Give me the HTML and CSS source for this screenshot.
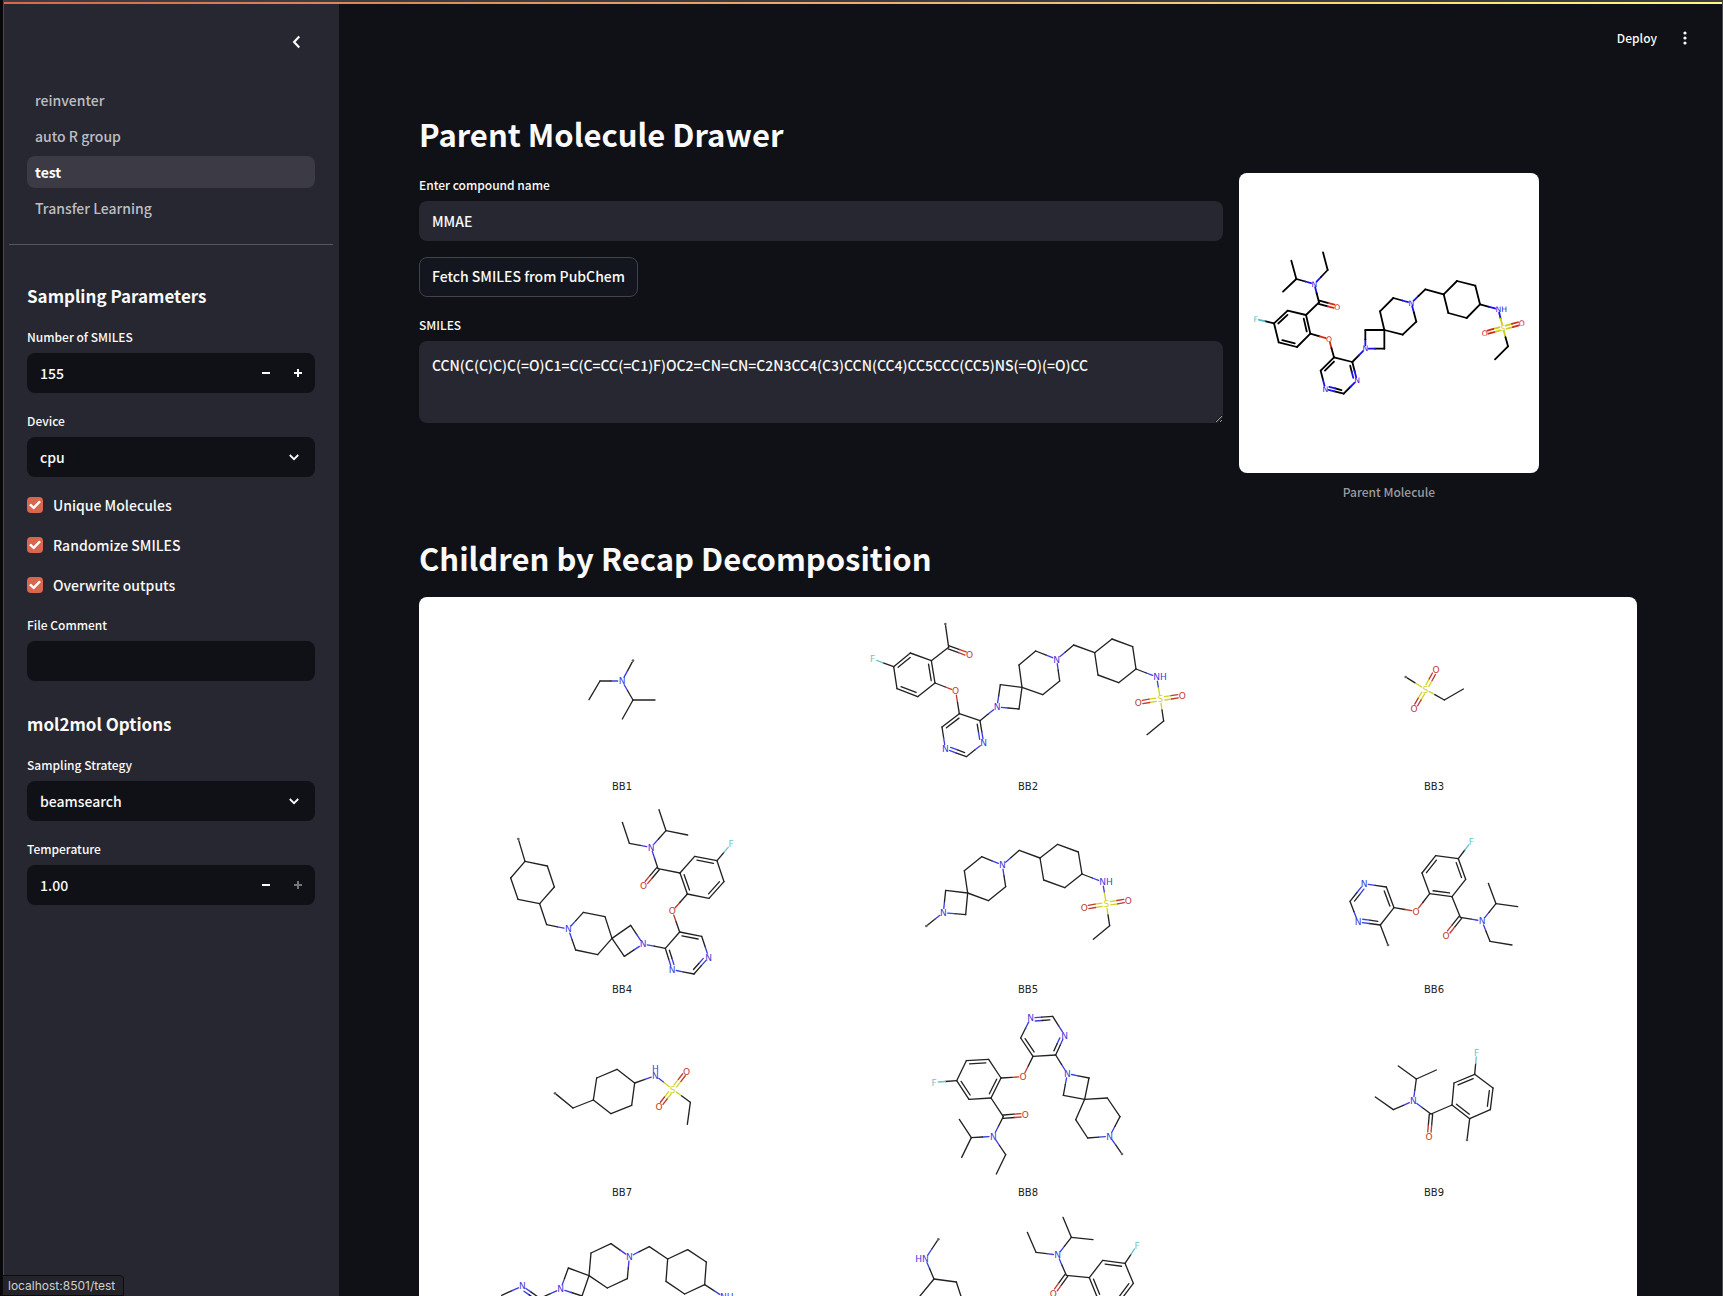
FILE: index.html
```html
<!DOCTYPE html>
<html lang="en">
<head>
<meta charset="utf-8">
<meta name="viewport" content="width=device-width, initial-scale=1">
<title>test</title>
<link rel="stylesheet" href="styles.css">
</head>
<body>
<div class="window">
  <div class="decoration"></div>
  <div class="app">
    <aside class="sidebar">
      <div class="sidebar-top">
        <button class="icon-button" type="button" aria-label="Collapse sidebar">
          <svg width="20" height="20" viewBox="0 0 24 24" fill="none" stroke="currentColor" stroke-width="2.6"><path d="M14.7 5.5 8.5 12l6.2 6.500"/></svg>
        </button>
      </div>
      <nav class="pages">
        <a class="page-link" href="#reinventer">reinventer</a>
        <a class="page-link" href="#auto">auto R group</a>
        <a class="page-link current" href="#test" aria-current="page">test</a>
        <a class="page-link" href="#transfer">Transfer Learning</a>
      </nav>
      <form class="options">
        <h2 class="section">Sampling Parameters</h2>
        <div class="field">
          <label class="label" for="count">Number of SMILES</label>
          <div class="control number">
            <input class="entry" id="count" type="number" value="155">
            <button class="step" type="button" aria-label="Decrease"><svg width="8" height="8" viewBox="0 0 8 8"><path d="M0 3h8v2H0z" fill="currentColor"/></svg></button>
            <button class="step" type="button" aria-label="Increase"><svg width="8" height="8" viewBox="0 0 8 8"><path d="M3 0h2v3h3v2H5v3H3V5H0V3h3z" fill="currentColor"/></svg></button>
          </div>
        </div>
        <div class="field">
          <label class="label" for="device">Device</label>
          <div class="control select">
            <select class="entry" id="device"><option>cpu</option></select>
            <svg class="chevron" width="10" height="7" viewBox="0 0 10 7" fill="none" stroke="currentColor" stroke-width="1.800"><path d="M.8 1 5 5.200 9.200 1"/></svg>
          </div>
        </div>
        <label class="check"><input type="checkbox" checked>Unique Molecules</label>
        <label class="check"><input type="checkbox" checked>Randomize SMILES</label>
        <label class="check"><input type="checkbox" checked>Overwrite outputs</label>
        <div class="field">
          <label class="label" for="comment">File Comment</label>
          <div class="control"><input class="entry" id="comment" type="text"></div>
        </div>
        <h2 class="section">mol2mol Options</h2>
        <div class="field">
          <label class="label" for="strategy">Sampling Strategy</label>
          <div class="control select">
            <select class="entry" id="strategy"><option>beamsearch</option></select>
            <svg class="chevron" width="10" height="7" viewBox="0 0 10 7" fill="none" stroke="currentColor" stroke-width="1.800"><path d="M.8 1 5 5.200 9.200 1"/></svg>
          </div>
        </div>
        <div class="field">
          <label class="label" for="temperature">Temperature</label>
          <div class="control number">
            <input class="entry" id="temperature" type="number" step="0.01" value="1.00">
            <button class="step" type="button" aria-label="Decrease"><svg width="8" height="8" viewBox="0 0 8 8"><path d="M0 3h8v2H0z" fill="currentColor"/></svg></button>
            <button class="step" type="button" aria-label="Increase" disabled><svg width="8" height="8" viewBox="0 0 8 8"><path d="M3 0h2v3h3v2H5v3H3V5H0V3h3z" fill="currentColor"/></svg></button>
          </div>
        </div>
      </form>
    </aside>
    <main class="main">
      <header class="toolbar">
        <button class="deploy" type="button">Deploy</button>
        <button class="icon-button" type="button" aria-label="Menu">
          <svg width="4" height="14" viewBox="0 0 4 14" fill="currentColor"><circle cx="2" cy="2" r="1.600"/><circle cx="2" cy="7" r="1.600"/><circle cx="2" cy="12" r="1.600"/></svg>
        </button>
      </header>
      <h1 class="title">Parent Molecule Drawer</h1>
      <div class="columns">
        <form class="compound">
          <div class="field">
            <label class="label" for="name">Enter compound name</label>
            <div class="control"><input class="entry" id="name" type="text" value="MMAE"></div>
          </div>
          <button class="fetch" type="button">Fetch SMILES from PubChem</button>
          <div class="field">
            <label class="label" for="smiles">SMILES</label>
            <textarea class="smiles" id="smiles" spellcheck="false">CCN(C(C)C)C(=O)C1=C(C=CC(=C1)F)OC2=CN=CN=C2N3CC4(C3)CCN(CC4)CC5CCC(CC5)NS(=O)(=O)CC</textarea>
          </div>
        </form>
        <figure class="parent">
          <svg class="molecule bold" data-molecule="parent" viewBox="27 39 900 900"></svg>
          <figcaption class="parent-caption">Parent Molecule</figcaption>
        </figure>
      </div>
      <h1 class="title second">Children by Recap Decomposition</h1>
      <div class="children">
        <figure class="child"><svg class="molecule" data-molecule="BB1" viewBox="27 21 1218 534"></svg><figcaption>BB1</figcaption></figure>
        <figure class="child"><svg class="molecule" data-molecule="BB2" viewBox="-45 -9 1218 534"></svg><figcaption>BB2</figcaption></figure>
        <figure class="child"><svg class="molecule" data-molecule="BB3" viewBox="-207 -9 1218 534"></svg><figcaption>BB3</figcaption></figure>
        <figure class="child"><svg class="molecule" data-molecule="BB4" viewBox="27 630 1218 534"></svg><figcaption>BB4</figcaption></figure>
        <figure class="child"><svg class="molecule" data-molecule="BB5" viewBox="-45 600 1218 534"></svg><figcaption>BB5</figcaption></figure>
        <figure class="child"><svg class="molecule" data-molecule="BB6" viewBox="-207 600 1218 534"></svg><figcaption>BB6</figcaption></figure>
        <figure class="child"><svg class="molecule" data-molecule="BB7" viewBox="-243 39 1218 534"></svg><figcaption>BB7</figcaption></figure>
        <figure class="child"><svg class="molecule" data-molecule="BB8" viewBox="-105 39 1218 534"></svg><figcaption>BB8</figcaption></figure>
        <figure class="child"><svg class="molecule" data-molecule="BB9" viewBox="-297 -51 1218 534"></svg><figcaption>BB9</figcaption></figure>
        <figure class="child"><svg class="molecule" data-molecule="BB10" viewBox="-243 648 1218 534"></svg><figcaption>BB10</figcaption></figure>
        <figure class="child"><svg class="molecule" data-molecule="BB11" viewBox="-105 648 1218 534"></svg><figcaption>BB11</figcaption></figure>
      </div>
    </main>
  </div>
</div>
<div class="status">localhost:8501/test</div>
<script src="molecules.js"></script>
</body>
</html>
```
FILE: styles.css
```css
* { box-sizing: border-box; }

body {
  margin: 0;
  background: #08080a;
  color: #fafafa;
  font-family: "Noto Sans CJK SC", "Noto Sans", sans-serif;
  font-size: 14px;
  font-weight: 500;
  line-height: 24px;
}

button, input, select, textarea { font: inherit; color: inherit; }
button { padding: 0; border: 0; background: none; cursor: pointer; }
h1, h2, figure { margin: 0; }
svg { display: block; }

.window {
  display: flex;
  flex-direction: column;
  height: 100vh;
  margin-left: 3px;
  border: solid #4a4a50;
  border-width: 2px 1px 0 1px;
  border-top-color: #3c3c44;
  background: #0f1116;
}

.decoration {
  flex: none;
  height: 2px;
  background: linear-gradient(90deg, #d9664f, #fffd80);
}

.app { display: flex; flex: 1; min-height: 0; }

/* Sidebar */
.sidebar {
  flex: none;
  width: 335px;
  background: #262730;
  overflow-y: auto;
  scrollbar-width: none;
}

.sidebar-top {
  display: flex;
  justify-content: flex-end;
  height: 80px;
  padding: 28px 32px 0 0;
}

.icon-button {
  display: grid;
  place-items: center;
  width: 20px;
  height: 20px;
}

.pages {
  display: flex;
  flex-direction: column;
  gap: 4px;
  margin: 0 6px 0 5px;
  padding: 0 18px 20px;
  border-bottom: 1px solid #55565d;
}

.page-link {
  padding: 4px 8px;
  border-radius: 8px;
  color: #bebec1;
  text-decoration: none;
}

.page-link.current { background: #3c3b45; color: #fff; font-weight: 700; }

.options {
  display: flex;
  flex-direction: column;
  gap: 16px;
  padding: 24px 24px 24px 23px;
}

.section {
  padding: 15px 0 1px;
  font-size: 17px;
  font-weight: 700;
  line-height: 24px;
}

.field { display: flex; flex-direction: column; gap: 4px; }
.label { font-size: 12px; }

.control {
  display: flex;
  height: 40px;
  border-radius: 8px;
  overflow: hidden;
}

.sidebar .control { background: #0f1116; }
.main .control { background: #262730; }

.entry {
  flex: 1;
  width: 100%;
  min-width: 0;
  padding: 0 13px;
  border: 0;
  outline: 0;
  background: transparent;
  appearance: none;
}

.number { padding-right: 1px; }
.number .entry { appearance: textfield; }
.number .entry::-webkit-inner-spin-button { appearance: none; margin: 0; }

.step { display: grid; place-items: center; width: 32px; }
.step:disabled { color: #73747d; }

.select { display: grid; align-items: center; }
.select > * { grid-area: 1 / 1; }
.select .entry { height: 40px; }
.chevron { justify-self: end; margin-right: 16px; pointer-events: none; }

.check { display: flex; align-items: center; gap: 10px; }

.check input {
  display: grid;
  place-items: center;
  width: 16px;
  height: 16px;
  margin: 0;
  border-radius: 4px;
  appearance: none;
}

.check input:checked { background: #d9664f; }

.check input:checked::before {
  content: "";
  width: 12px;
  height: 10px;
  background: #fff;
  clip-path: polygon(0 52%, 16% 36%, 38% 62%, 84% 5%, 100% 20%, 40% 96%);
}

/* Main area */
.main {
  flex: 1;
  min-width: 0;
  padding: 0 85px 0 80px;
  overflow-y: auto;
  scrollbar-width: none;
}

.toolbar {
  display: flex;
  align-items: center;
  justify-content: flex-end;
  gap: 18px;
  height: 68px;
  margin: 0 -58px 41px 0;
}

.deploy { font-size: 12px; }

.title {
  margin-bottom: 18px;
  font-size: 31px;
  font-weight: 700;
  line-height: 42px;
}

.title.second { margin-top: 33px; }

.columns { display: grid; grid-template-columns: 101fr 50fr; gap: 16px; }

.compound {
  display: flex;
  flex-direction: column;
  align-items: stretch;
  gap: 16px;
}

.fetch {
  align-self: flex-start;
  height: 40px;
  padding: 0 12px 2px;
  border: 1px solid #41434b;
  border-radius: 8px;
  background: #13161e;
}

.smiles {
  height: 82px;
  padding: 12px 13px;
  border: 0;
  border-radius: 8px;
  outline: 0;
  background: #262730;
  resize: vertical;
}

.parent { width: 300px; max-width: 100%; }
.parent .molecule { border-radius: 8px; background: #fff; }

.parent-caption {
  padding-top: 7px;
  color: #9b9ca0;
  font-size: 12px;
  text-align: center;
}

.children {
  display: grid;
  grid-template-columns: repeat(3, 1fr);
  border-radius: 8px;
  background: #fff;
}

.child { padding-bottom: 1px; }

.child figcaption {
  color: #222;
  font-family: "DejaVu Sans", sans-serif;
  font-size: 10px;
  font-weight: 400;
  line-height: 24px;
  text-align: center;
}

/* Molecule drawings */
.molecule { width: 100%; overflow: visible; }

.molecule line { stroke-width: 4; stroke-linecap: round; }
.molecule.bold line { stroke-width: 5.4; }

.molecule text {
  font-family: "DejaVu Sans", sans-serif;
  font-size: 27px;
  font-weight: 400;
}

.molecule.bold text { font-size: 23px; }

/* Link preview in the window's corner */
.status {
  position: fixed;
  left: 2px;
  bottom: 0;
  height: 21px;
  padding: 0 8px 0 5px;
  border: 1px solid #0c0c0e;
  border-radius: 0 4px 0 0;
  background: #232329;
  color: #cfcfd2;
  font-family: Inter, sans-serif;
  font-size: 12px;
  font-weight: 400;
  line-height: 20px;
}
```
FILE: molecules.js
```js
// Atoms are "x,y" or "x,y,label". Bonds are "a-b" (single), "a=b" (double,
// two even lines) and "a:b" (ring double, inner line to the right of a to b).
const MOLECULES = {
  parent: {
    atoms: "184,302 199,357 159,395 253,372,N 293,330 279,277 267,427 322,441,O 228,465 173,452 132,490 77,477,F 146,547 201,561 241,521 297,537,O 312,592 272,632 286,687,N 341,701 381,661,N 367,606 406,566,N 406,510 463,510 463,566 450,454 490,414 544,429,N 559,485 518,524 586,388 641,403 681,363 736,377 750,433 710,474 655,459 805,448,NH 819,504,S 764,519,O 875,489,O 834,559 795,598",
    bonds: "0-1 1-2 1-3 3-4 4-5 3-6 6=7 6-8 8-9 10:9 10-11 10-12 13:12 13-14 8:14 14-15 15-16 17:16 17-18 19:18 19-20 21:20 21-16 21-22 22-23 23-24 24-25 25-22 24-26 26-27 27-28 28-29 29-30 30-24 28-31 31-32 32-33 33-34 34-35 35-36 36-37 37-32 35-38 38-39 39=40 39=41 39-42 42-43"
  },
  BB1: {
    atoms: "669,212,* 636,273,N 570,273 537,329 669,330 735,330 637,387",
    bonds: "0-1 1-2 2-3 1-4 4-5 4-6"
  },
  BB2: {
    atoms: "316,72,* 326,142 389,165,O 274,182 211,159 161,200 98,177,F 171,266 233,290 285,249 347,273,O 358,341 306,381 316,447,N 379,470 431,429,N 420,362 471,321,N 481,254 546,262 537,327 537,195 587,153 650,178,N 659,243 608,284 701,135 764,158 816,117 878,140 888,207 836,248 774,225 950,231,NH 961,297,S 895,308,O 1027,287,O 971,363 921,404",
    bonds: "0-1 1=2 1-3 3-4 5:4 5-6 5-7 8:7 8-9 3:9 9-10 10-11 12:11 12-13 14:13 14-15 16:15 16-11 16-17 17-18 18-19 19-20 20-17 19-21 21-22 22-23 23-24 24-25 25-19 23-26 26-27 27-28 28-29 29-30 30-31 31-32 32-27 30-33 33-34 34=35 34=36 34-37 37-38"
  },
  BB3: {
    atoms: "317,231,* 376,268,S 408,210,O 342,326,O 433,300 490,267",
    bonds: "0-1 1=2 1=3 1-4 4-5"
  },
  BB4: {
    atoms: "325,747,* 345,814 412,828 433,891 389,941 324,928 302,864 410,1004 475,1017,N 520,967 585,980 606,1045 563,1094 497,1080 662,1006 699,1062,N 643,1099 766,1075 809,1026 875,1039 896,1102,N 852,1152 786,1139,N 787,963,O 832,912 810,849 854,799 921,812 942,875 897,925 963,762,F 744,836 701,887,O 723,772,N 658,760 637,697 768,722 747,659 833,735",
    bonds: "0-1 1-2 2-3 3-4 4-5 5-6 6-1 4-7 7-8 8-9 9-10 10-11 11-12 12-13 13-8 11-14 14-15 15-16 16-11 15-17 17-18 18:19 19-20 20:21 21-22 22:17 18-23 23-24 24:25 25-26 26:27 27-28 28:29 29-24 27-30 25-31 31=32 31-33 33-34 34-35 33-36 36-37 36-38"
  },
  BB5: {
    atoms: "259,978,* 310,938,N 317,871 383,879 377,944 373,812 425,770 487,795,N 497,860 445,902 538,751 600,774 653,733 715,756 726,822 674,863 611,840 788,846,NH 799,912,S 733,923,O 865,901,O 809,977 760,1018",
    bonds: "0-1 1-2 2-3 3-4 4-1 3-5 5-6 6-7 7-8 8-9 9-3 7-10 10-11 11-12 12-13 13-14 14-15 15-16 16-11 14-17 17-18 18=19 18=20 18-21 21-22"
  },
  BB6: {
    atoms: "264,1035,* 241,975 174,966,N 150,904 192,851,N 259,861 282,923 348,934,O 389,881 366,819 407,767 475,776 497,838 456,890 514,724,F 481,952 438,1006,O 546,963,N 588,911 565,850 653,920 570,1024 636,1035",
    bonds: "0-1 1:2 2-3 3:4 4-5 5:6 6-1 6-7 7-8 8-9 9:10 10-11 11:12 12-13 13:8 11-14 13-15 15=16 15-17 17-18 18-19 18-20 17-21 21-22"
  },
  BB7: {
    atoms: "165,310,* 219,354 280,330 290,264 351,238 404,279 395,346 333,371 466,257,N/H 518,298,S 560,244,O 477,350,O 571,337 562,403",
    bonds: "0-1 1-2 2-3 3-4 4-5 5-6 6-7 7-2 5-8 8-9 9=10 9=11 9-12 12-13"
  },
  BB8: {
    atoms: "786,492,* 749,439,N 780,380 742,324 674,328 647,389 683,444 687,264 622,251,N 610,316 587,195 614,136,N 578,79 512,84,N 482,144 519,199 489,260,O 423,264 386,208 319,212 290,272 222,277,F 327,328 393,324 430,380 496,375,O 400,439,N 334,443 298,388 305,502 437,494 409,552",
    bonds: "0-1 1-2 2-3 3-4 4-5 5-6 6-1 4-7 7-8 8-9 9-4 8-10 13:12 12-11 11:10 10-15 15:14 14-13 15-16 16-17 18-17 19:18 20-19 22:20 23-22 17:23 20-21 23-24 24=25 24-26 26-27 27-28 27-29 26-30 30-31"
  },
  BB9: {
    atoms: "411,360,* 419,296 366,255 372,189 434,163 489,204 481,269 440,98,F 303,282 297,349,O 250,243,N 190,269 136,231 259,177 205,138 319,150",
    bonds: "0-1 1:2 2-3 3:4 4-5 5:6 6-1 4-7 2-8 8=9 8-10 10-11 11-12 10-13 13-14 13-15"
  },
  BB10: {
    atoms: "5,916 67,888,N 120,925 182,897,N 205,834 267,857 246,918 273,789 333,761 388,800,N 382,866 322,894 448,770 503,807 563,779 619,816 614,884 554,912 498,874 670,920,NH",
    bonds: "0-1 1:2 2-3 3-4 4-5 5-6 6-3 5-7 7-8 8-9 9-10 10-11 11-5 9-12 12-13 13-14 14-15 15-16 16-17 17-18 18-13 16-19"
  },
  BB11: {
    atoms: "235,748,* 196,806,HN 222,867 289,876 310,940 170,930 502,727 528,787 593,795,N 634,742 609,682 699,749 619,856 580,910,O 688,863 728,811 795,820 831,766,F 820,880 780,933 713,925",
    bonds: "0-1 1-2 2-3 3-4 2-5 6-7 7-8 8-9 9-10 9-11 8-12 12=13 12-14 14-15 15:16 16-17 16-18 18:19 19-20 20:14"
  }
};

const SVG = "http://www.w3.org/2000/svg";
const PALE = { C: "#222", N: "#3c3cdc", O: "#c03a30", F: "#6cc3c8", S: "#d2d22c" };
const VIVID = { C: "#000", N: "#1a10e8", O: "#d02a1c", F: "#4cb8c4", S: "#cccc10" };

function add(svg, name, attributes, text) {
  const node = document.createElementNS(SVG, name);
  for (const key in attributes) node.setAttribute(key, attributes[key]);
  if (text) node.textContent = text;
  svg.append(node);
}

function draw(svg) {
  const bold = svg.classList.contains("bold");
  const colors = bold ? VIVID : PALE;
  const source = MOLECULES[svg.dataset.molecule];
  const atoms = source.atoms.split(" ").map(entry => {
    const [x, y, label = ""] = entry.split(",");
    const element = (label.match(/[NOFS]/) || ["C"])[0];
    const gap = label === "*" ? 5 : label ? (bold ? 10 : 13) : 0;
    return { x: +x, y: +y, label, gap, color: colors[element] };
  });

  const stroke = (a, b, shift, trim) => {
    const length = Math.hypot(b.x - a.x, b.y - a.y);
    const ux = (b.x - a.x) / length, uy = (b.y - a.y) / length;
    const at = d => [a.x + ux * d - uy * shift, a.y + uy * d + ux * shift];
    const start = at(Math.max(a.gap, trim));
    const middle = at(length / 2);
    const end = at(length - Math.max(b.gap, trim));
    const segment = (p, q, color) =>
      add(svg, "line", { x1: p[0], y1: p[1], x2: q[0], y2: q[1], stroke: color });
    if (a.color === b.color) return segment(start, end, a.color);
    segment(start, middle, a.color);
    segment(middle, end, b.color);
  };

  for (const bond of source.bonds.split(" ")) {
    const [, i, kind, j] = bond.match(/(\d+)([-=:])(\d+)/);
    const a = atoms[i], b = atoms[j];
    if (kind === "=") {
      stroke(a, b, -5, 0);
      stroke(a, b, 5, 0);
    } else {
      stroke(a, b, 0, 0);
      if (kind === ":") stroke(a, b, bold ? 9 : 10, 9);
    }
  }

  const size = bold ? 23 : 27;
  for (const { x, y, label, color } of atoms) {
    if (!label) continue;
    const baseline = y + size * 0.36;
    const half = size * 0.37;
    if (label === "*") {
      add(svg, "circle", { cx: x, cy: y, r: 4, fill: "#666" });
    } else if (label === "N/H") {
      add(svg, "text", { x, y: baseline, fill: color, "text-anchor": "middle" }, "N");
      add(svg, "text", { x, y: baseline - 22, fill: color, "text-anchor": "middle" }, "H");
    } else if (label === "NH") {
      add(svg, "text", { x: x - half, y: baseline, fill: color }, label);
    } else if (label === "HN") {
      add(svg, "text", { x: x + half, y: baseline, fill: color, "text-anchor": "end" }, label);
    } else {
      add(svg, "text", { x, y: baseline, fill: color, "text-anchor": "middle" }, label);
    }
  }
}

document.querySelectorAll(".molecule").forEach(draw);
```
